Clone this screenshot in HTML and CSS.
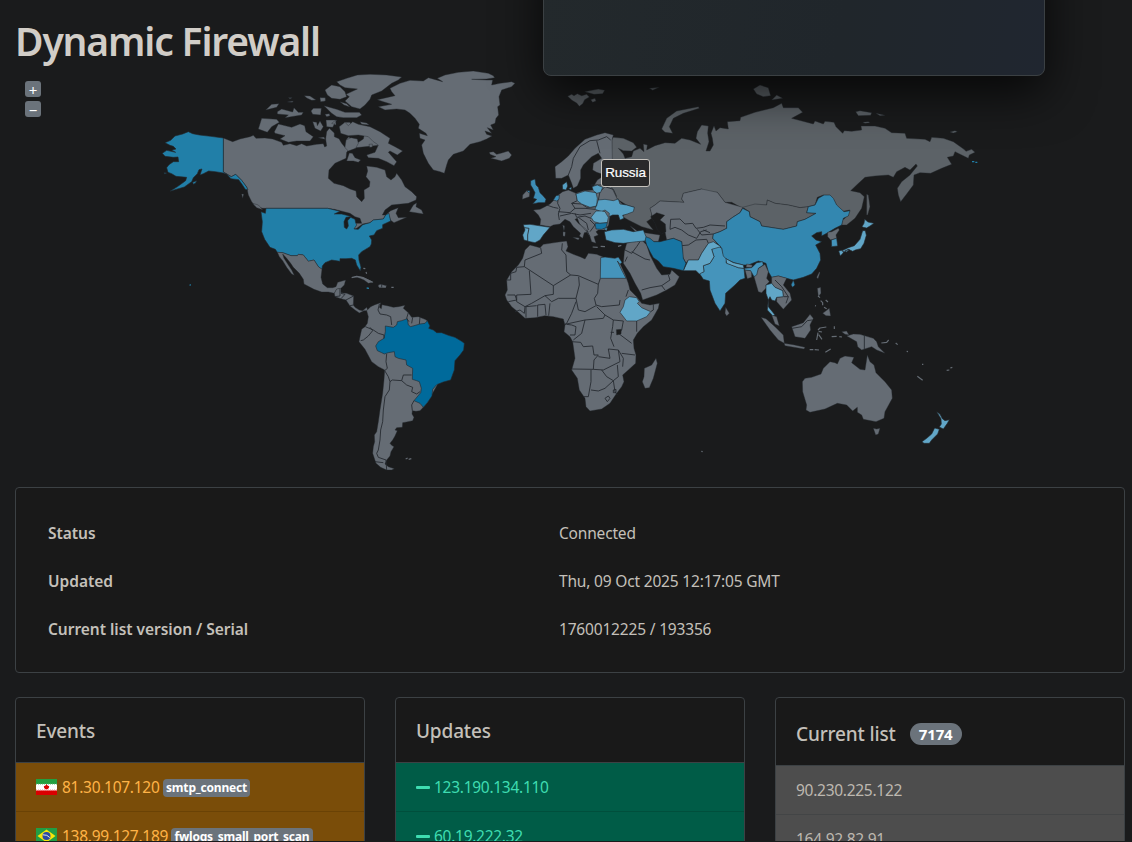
FILE: index.html
```html
<!DOCTYPE html>
<html lang="en">
<head>
<meta charset="utf-8">
<title>Dynamic Firewall</title>
<link rel="stylesheet" href="styles.css">
</head>
<body>
<main class="page">
<h1 class="title">Dynamic Firewall</h1>
<section class="map">
<svg class="world" viewBox="15 71 1110 400" role="img" aria-label="World map">
<!-- North America -->
<g class="land" transform="translate(150 65) scale(.33333)">
<path d="M220 219L248 230 270 222 300 215 310 211 318 220 345 219 368 222 395 232 400 241 420 236 440 242 455 236 470 243 500 238 520 236 524 246 530 243 527 222 530 200 538 190 553 204 553 215 567 221 575 235 585 247 590 222 597 215 610 235 625 232 640 222 645 200 655 190 665 200 660 215 680 218 695 240 600 250 590 262 588 280 555 295 537 315 535 340 552 355 580 362 600 372 618 378 620 395 635 410 643 400 642 375 658 365 660 350 648 335 653 318 650 303 680 307 705 315 710 335 723 345 735 335 740 325 755 345 765 365 785 380 800 395 798 405 775 415 745 418 725 420 705 435 697 450 707 450 700 462 670 465 660 473 638 477 620 490 612 493 615 475 635 475 630 460 615 455 600 445 570 437 553 433 532 430 338 430 315 423 305 410 295 390 292 375 290 366 275 346 257 328 244 335 220 321Z"/>
<path d="M707 450L722 437 745 428 738 445 745 458 770 457 732 473 722 466 717 452ZM778 440L790 420 800 413 798 425 815 435 820 447 778 440M335 160L380 163 388 172 365 185 352 202 325 192ZM373 200L385 177 425 187 450 177 464 182 468 200 490 215 480 228 440 228 415 232 390 222 405 212 375 205ZM382 140L395 132 428 141 432 128 445 142 460 142 455 150 405 158 415 150 382 147ZM347 135L365 118 387 116 380 127ZM463 92L480 93 498 105 485 106 470 99ZM483 138L490 130 514 130 512 150 488 148ZM488 170L500 172 502 182 510 168 520 185 512 198 495 190ZM528 165L560 165 548 187 530 185ZM568 185L585 172 600 172 610 190 600 210 575 205ZM412 111L430 108 427 112ZM415 98L427 98 420 101ZM510 98L526 102 520 109 512 106ZM525 148L538 146 540 152 530 155ZM505 218L522 216 525 223ZM275 387L281 387 278 400ZM308 415L325 420 338 434 320 428ZM545 175L558 165 558 180Z"/>
<path d="M560 50L590 40 622 30 660 28 710 30 755 36 745 45 725 55 695 78 665 90 660 103 645 120 630 132 605 125 585 108 598 95 588 88 622 72 585 68 570 60ZM525 75L545 60 570 65 585 80 590 95 570 103 545 100 532 90ZM522 122L560 133 585 142 628 142 635 150 620 158 580 158 560 155 545 145ZM568 185L585 172 595 182 608 170 625 178 660 185 690 200 720 220 715 235 735 245 758 258 742 270 720 258 715 262 740 290 732 302 710 290 685 280 655 278 650 270 675 262 685 240 670 230 655 215 625 210 595 212 572 205ZM657 238L667 237 667 246 659 247ZM588 225L603 218 622 222 625 235 617 250 595 258 585 248ZM590 288L598 264 607 265 615 278 632 285 625 292 610 288ZM630 170L650 174 658 180 635 178ZM510 98L526 98 526 108 512 110ZM570 110L590 116 600 126 582 120Z"/>
<path d="M862 40L885 30 925 22 970 18 1015 25 1030 32 1034 38 1010 42 965 43 1010 45 1028 45 1025 60 1050 55 1085 50 1095 55 1085 65 1055 75 1047 95 1050 120 1043 125 1046 150 1038 160 1035 175 1022 180 1030 195 1012 188 1025 205 1005 198 1010 208 1026 213 1010 222 990 230 960 238 940 258 910 268 895 285 890 300 883 325 870 320 850 315 835 295 820 265 815 240 825 225 810 220 808 205 832 212 828 205 805 190 808 178 795 160 780 145 765 135 740 132 705 135 685 125 725 118 700 110 682 104 735 92 725 80 720 70 750 55 780 46 820 48 835 38 878 50ZM1018 262L1030 260 1040 268 1055 264 1075 258 1085 270 1078 280 1055 288 1035 283 1022 280 1038 275 1020 268Z"/>
<path class="us" d="M220 219L182 214 148 210 128 206 115 200 98 207 75 213 62 226 45 233 60 241 70 244 78 252 65 256 77 262 50 256 37 265 45 274 70 277 84 276 86 290 70 290 57 299 50 308 54 322 65 326 78 334 110 337 107 347 84 364 60 379 75 374 103 366 125 350 130 338 142 326 147 314 156 312 150 330 160 326 176 318 196 320 220 324 230 327 243 341 266 344 276 358 286 373 294 375 290 366 275 346 257 328 244 335 220 321ZM128 352L140 347 137 354 130 358ZM42 323L50 324 44 327Z"/>
</g>
<g class="land" transform="translate(240 190) scale(.33333)">
<path class="us" d="M78 55L263 55 284 60 300 64 283 72 305 72 320 76 333 80 318 82 312 95 313 112 320 117 325 108 323 92 332 82 345 88 347 98 350 105 342 117 355 118 368 104 390 98 400 90 430 87 437 75 447 70 450 85 452 93 428 104 428 115 410 122 402 135 388 138 395 150 394 162 390 170 365 185 356 195 357 210 363 232 361 243 350 225 346 210 335 205 318 206 300 206 300 214 275 210 255 218 247 228 246 238 235 230 222 210 205 214 190 195 175 193 172 197 153 197 128 188 112 187 106 178 90 172 74 148 65 125 67 95 63 65 76 70Z"/>
<path d="M112 187L128 188 153 197 172 197 175 193 190 195 205 214 222 210 235 230 246 238 243 262 248 282 262 293 278 293 288 290 293 277 317 270 313 285 303 295 290 298 283 310 265 306 245 306 222 298 192 282 190 268 178 250 160 232 152 220 140 205 128 192 132 205 145 225 155 240 163 256 155 252 140 232 128 212 118 200Z"/>
<path d="M283 310L290 297 303 295 303 308 320 310 341 318 340 345 345 352 358 360 368 362 380 352 384 362 372 362 358 369 345 360 330 348 318 330 303 326 285 320ZM335 263L350 258 370 262 388 270 400 277 385 280 372 270 352 262ZM415 285L422 283 440 287 436 293 415 291Z"/>
<path class="isle" d="M335 263L350 259 370 263 398 277M417 291L438 291M454 292L461 292M378 246L380 251M370 235L376 236"/>
<path class="lines" d="M300 297L300 318 285 320M303 310L315 313 303 326M318 330L341 318M330 347L341 345M425 283L425 292"/>
<path class="us isle-us" d="M380 294L387 295M-151 284L-148 286"/>
</g>
<!-- South America -->
<g class="land" transform="translate(340 290) scale(.33333)">
<path d="M80 62L92 50 105 44 122 38 118 52 124 56 126 44 145 48 160 52 175 50 195 46 190 55 205 68 215 82 235 80 255 88 262 92 266 115 343 200 300 270 262 338 250 352 240 362 228 364 217 362 216 372 222 382 218 392 200 396 188 398 187 412 170 413 165 420 172 422 165 438 158 450 150 460 155 466 162 470 153 485 150 498 140 510 135 522 145 530 163 536 155 540 140 540 122 532 108 520 98 490 100 470 104 455 103 435 110 425 115 395 120 360 128 310 132 270 134 240 115 230 95 215 75 178 57 155 60 140 65 118 75 110 82 100 85 80Z"/>
<path class="isle" d="M197 507L203 504M206 508L214 506"/>
<path class="br" d="M136 108L160 112 170 105 172 95 185 92 202 86 205 105 212 110 240 102 255 100 262 92 270 108 266 115 280 120 290 128 305 128 325 136 345 142 365 154 373 160 371 180 360 195 345 212 343 240 332 270 310 276 290 284 278 298 276 318 262 338 250 352 240 340 222 332 242 308 244 295 238 275 230 272 217 268 218 235 200 225 198 210 175 205 165 200 163 185 145 188 133 192 125 188 112 182 107 168 115 155 132 145 136 125Z"/>
<path class="lines" d="M118 42L114 60 120 72 140 75 152 80 155 105M205 68L200 85 207 95M218 82L215 100M240 82L238 102M90 112L98 122 85 138 70 150 62 152M76 110L100 120 115 130 132 135 132 145M140 192L138 215 142 235 134 242 145 260 150 275 157 270 185 272 190 255 215 255M185 272L200 285 218 292 215 305 230 312 240 305M217 362L215 345 222 332M150 275L148 300 135 320 130 360 128 395 122 420 120 450 115 480 110 490 115 502 138 510 140 540M105 515L130 518"/>
</g>
<!-- Russia and Arctic islands -->
<g class="land" transform="translate(640 75) scale(.33333)">
<path class="ru" d="M-85 195L-80 187 -50 190 -20 203 -10 217 -25 228 -50 227 -65 220 -50 237 -45 250 -25 245 -20 228 0 220 12 230 10 207 22 210 20 225 45 212 75 203 105 205 125 190 150 195 182 208 168 190 172 170 185 150 205 153 203 175 207 200 198 228 210 228 220 210 217 190 213 175 222 152 228 168 240 158 265 162 262 140 300 137 302 127 345 112 400 98 425 85 430 98 475 98 488 112 455 130 520 147 525 138 550 147 555 139 582 142 588 155 608 175 613 167 635 169 665 165 663 153 705 153 735 160 755 173 795 175 800 190 855 193 870 200 875 187 910 190 940 200 972 223 978 229 995 223 1005 232 988 240 985 250 965 240 945 230 940 243 922 247 935 268 905 280 872 295 840 293 822 300 820 330 800 357 782 380 775 360 772 340 785 320 810 300 832 273 828 267 810 285 795 277 770 290 760 307 745 300 705 303 675 307 650 330 632 347 660 353 673 365 665 400 645 430 620 450 605 450 607 435 615 430 630 405 602 410 580 390 570 370 550 360 532 367 525 390 505 395 480 398 445 390 405 385 382 375 380 390 345 390 308 400 275 382 255 382 232 352 195 350 185 342 130 355 125 372 132 382 60 378 45 390 30 400 35 415 35 430 20 440 40 465 5 455 -35 435 -52 425 -45 412 -17 397 -40 390 -65 375 -78 360 -100 330 -95 265 -85 225ZM65 162L80 130 110 108 175 95 178 100 130 115 100 130 88 155 98 175 75 172ZM340 42L360 30 385 38 392 62 370 65 350 57ZM395 75L410 60 428 70ZM28 40L58 37 38 46ZM647 110L660 107 695 113 692 121 655 122ZM708 115L735 121 720 122ZM668 142L685 140 690 143 675 145ZM930 171L945 167 952 170 940 174ZM680 358L685 360 690 395 683 420 680 420Z"/>
<path class="us isle-us" d="M996 260L1003 260M1006 262L1012 262"/>
<path class="ru" d="M-217 64L-205 58 -198 62 -188 56 -175 62 -160 58 -152 66 -166 74 -172 86 -182 94 -190 84 -204 76ZM-166 50L-145 46 -125 42 -106 46 -112 56 -138 58 -152 54ZM-148 74L-135 70 -132 78 -142 82Z"/>
</g>
<!-- Asia -->
<g class="land" transform="translate(660 200) scale(.33333)">
<path d="M-30 25L-15 15 0 3 72 7 65 -3 70 -20 125 -33 172 -23 195 7 248 22 240 38 218 52 200 65 200 85 180 95 160 102 158 115 172 130 145 130 125 160 115 180 85 180 78 190 68 170 65 125 40 115 20 120 15 95 -20 60Z"/>
<path class="lines" d="M30 88L32 58 60 57 75 72 98 70 108 85 130 82 150 75 195 78M30 88L45 82 65 90 85 105 110 115 122 95 140 90M66 137L85 135 108 120 140 118 145 130M112 88L125 105 160 102M130 90L150 98"/>
<path class="ru" d="M248 22L285 12 320 15 322 0 345 10 385 15 420 23 445 20 440 38 468 40 435 58 412 65 410 78 370 88 305 78 300 65 270 50 268 35Z"/>
<path class="cn" d="M248 25L268 35 270 50 300 65 305 78 370 88 410 78 412 65 435 58 468 40 440 38 445 20 465 15 475 -5 492 -15 510 -15 520 -5 530 15 552 35 570 32 565 48 550 55 545 75 525 85 500 100 485 108 485 95 470 98 455 108 468 120 485 125 467 135 480 160 482 180 470 205 455 222 430 232 400 240 380 235 355 228 335 232 325 215 318 190 295 183 265 195 250 195 222 188 200 178 188 170 185 145 172 130 158 115 160 102 180 95 200 85 200 65 218 52 240 38ZM393 255L400 240 405 255 398 262Z"/>
<path d="M503 97L515 95 535 85 538 90 528 105 530 115 512 120 503 110ZM260 192L277 195 275 203 258 202ZM255 210L275 212 275 232 262 236ZM282 230L295 205 315 193 325 215 320 235 328 245 318 255 325 290 318 265 305 278 295 275ZM335 232L355 228 380 235 370 255 390 280 395 300 370 328 350 305 350 292 370 290 368 272 345 262 335 250ZM335 345L350 350 358 378 345 372ZM197 322L208 340 200 348 195 340ZM303 352L318 356 345 380 370 405 373 430 355 420 330 390ZM372 430L400 434 435 442 432 447 375 437ZM395 380L430 368 450 343 460 355 450 375 452 390 435 415 405 410ZM470 232L478 215 480 218 474 236ZM472 265L482 262 483 280 475 290ZM488 340L508 325 512 348 498 347ZM545 395L560 393 567 405 555 403ZM560 408L580 402 600 403 640 415 650 425 655 440 675 460 650 450 635 440 605 450 593 440 590 425 572 415Z"/>
<path class="isle" d="M474 390L480 384 499 381M476 394L486 396M474 398L470 420M476 404L486 418M474 288L480 293M482 302L488 308 488 316M497 300L504 306M492 322L500 326M523 379L523 387M449 449L460 449M464 449L477 450M496 457L512 447M515 410L530 409M538 410L546 411M664 429L680 427 686 420M465 317L468 318"/>
<path class="lines" d="M613 404L613 448M397 385L425 380 442 362 456 360M345 240L365 260 385 290 378 310M372 290L385 290"/>
<path class="in" d="M172 135L185 145 190 168 200 178 198 188 235 203 252 205 255 235 240 240 225 255 197 280 195 310 180 333 165 310 150 270 148 243 130 238 118 220 132 215 130 197 150 190 162 170 155 148ZM253 205L275 203 290 188 308 185 310 195 295 205 290 225 282 230 272 212 255 210Z"/>
<path class="pk" d="M70 212L85 180 115 180 125 160 145 130 160 125 183 140 155 148 162 170 150 190 130 197 132 215 118 222 108 212ZM198 176L220 188 250 195 252 205 235 203 200 190ZM318 255L335 250 345 262 368 272 370 290 350 292 345 303 335 300 330 290 325 300 325 320 345 345 338 347 322 330 325 300 318 280ZM606 80L612 70 614 58 624 66 642 70 630 78 620 84 610 82ZM608 92L616 92 619 106 612 130 602 146 586 150 578 154 565 148 552 156 545 152 565 143 583 137 600 118ZM536 153L548 150 550 158 541 168ZM555 151L568 149 558 157Z"/>
<path class="in" d="M514 120L530 115 533 138 515 140Z"/>
<path class="sea" d="M-28 50L-10 38 14 46 0 60 16 72 18 95 5 102 -8 90 -15 70Z"/>
</g>
<!-- Australia and Pacific -->
<g class="land" transform="translate(750 300) scale(.33333)">
<path d="M157 245L165 235 185 232 213 222 220 205 240 185 255 188 262 192 270 175 285 168 312 172 305 188 330 208 345 210 352 165 360 185 372 195 378 218 405 245 425 270 427 295 405 335 402 355 378 365 340 358 335 345 322 337 322 322 308 333 290 315 262 310 225 327 180 337 168 330 170 315 158 275ZM370 385L380 387 390 385 385 402 377 405Z"/>
<path class="isle" d="M502 229L518 241M590 211L598 210M601 204L607 202M437 129L443 134M470 154L474 155M516 193L520 193M-146 454L-142 455"/>
<path class="pk" d="M560 335L570 343 577 356 585 362 598 359 592 370 580 387 568 381 574 372 573 356ZM516 425L530 415 545 402 554 384 568 388 563 402 545 420 538 430 522 430Z"/>
</g>
<!-- Africa and Middle East -->
<g class="land" transform="translate(490 235) scale(.33333)">
<path d="M120 30L150 38 160 28 200 22 230 18 234 35 228 48 250 58 270 65 285 72 295 55 320 58 345 68 375 70 385 68 392 90 405 118 415 145 420 165 440 185 455 205 480 210 508 205 505 220 485 255 460 275 442 295 430 315 432 340 438 360 437 385 415 405 398 420 402 440 395 455 380 475 360 505 335 522 300 528 288 515 285 490 268 465 262 430 245 405 255 370 248 320 240 305 222 290 225 270 220 252 190 245 165 242 135 248 105 250 85 232 65 215 50 195 45 180 52 165 50 135 65 110 85 90 98 70 105 45ZM463 400L485 390 498 370 502 385 490 430 478 458 465 460 457 440 462 425ZM403 50L410 25 450 10 470 30 480 60 490 80 500 100 515 120 540 118 545 105 568 125 555 150 530 165 500 180 458 195 452 175 435 145 420 115 400 85ZM420 -28L445 -10 510 0 505 20 465 20 450 5Z"/>
<path class="isle" d="M332 34L345 35M384 34L394 31"/>
<path class="lines" d="M152 38L155 55 105 75 103 95 80 97 78 110 62 115 62 135 50 135M103 95L190 152 190 178 165 182 125 205 105 215 80 200 80 180 123 178 118 107M217 25L215 45 228 60 230 110 242 120 190 152M242 120L265 122 325 148 331 130M325 148L323 175 313 190 318 210 335 215 388 210 390 195M266 125L268 150 258 190 205 190 185 200 165 182M258 190L265 225 285 230 318 212M258 200L245 235 230 265 225 268 285 255 340 250 345 240 320 215M285 255L275 295 250 315M230 268L245 270 258 275 255 300 240 300M245 320L272 322 280 335 308 333 312 360 325 360 312 375 310 403 245 402M325 365L360 370 355 342 385 345 390 380 340 405 310 403M345 240L370 255 368 275 362 310 372 335M370 255L400 258 395 285 385 295 425 325M395 355L435 360M385 345L400 370 398 395M440 258L440 290M303 405L303 440 295 485 280 485M303 465L325 468 345 460 370 437 375 470 382 480M335 405L350 425 370 437 385 425 382 390M345 490L355 483 360 490 352 500 345 490M370 465L378 463 378 473 370 473ZM105 215L103 235 90 225 75 230M108 248L108 215 140 212M143 245L143 210 165 208 168 240M176 242L180 205M52 180L75 180 80 195 55 200M362 292L372 292M415 165L408 185M490 208L490 225 482 230M405 45L425 55 440 35 450 20M425 50L465 72 480 75M455 165L480 158 515 152 540 135 535 120M515 152L525 165M412 65L405 80"/>
<path class="sea" d="M379 284L394 283 393 297 380 300Z"/>
<path class="in" d="M332 68L345 66 375 70 385 66 396 82 390 88 382 78 395 105 408 130 331 130Z"/>
<path class="pk" d="M405 195L418 185 440 188 448 200 442 205 455 218 482 230 470 245 440 258 410 258 390 232 400 215Z"/>
<path class="ir" d="M462 3L480 10 492 20 510 20 550 10 575 20 578 45 580 70 588 85 580 107 550 100 520 95 505 78 490 68 480 50 470 30Z"/>
</g>
<!-- Europe -->
<g class="land" transform="translate(490 130) scale(.33333)">
<path d="M197 145L195 110 215 95 235 78 255 55 285 28 320 15 345 8 370 15 366 30 367 85 380 120 365 172 382 208 400 225 360 255 356 285 345 300 325 300 318 305 325 315 312 320 318 340 305 335 300 320 290 305 278 292 268 280 262 265 255 268 265 280 285 295 295 305 283 308 278 325 268 318 272 310 250 290 240 275 225 268 210 282 190 285 180 290 150 285 152 268 145 255 130 240 150 238 165 230 180 222 192 210 205 195 218 185 235 180 258 190 280 182 310 180 310 170 322 150 345 135 320 127 308 120 310 100 335 85 325 70 305 80 280 105 272 120 272 145 262 168 250 175 245 160 235 135 215 145ZM97 208L98 195 110 182 120 184 118 200ZM218 285L224 288 222 302ZM219 305L226 306 225 319 219 318ZM248 322L268 324 265 330Z"/>
<path class="isle" d="M308 351L323 352"/>
<path class="lines" d="M235 135L245 110 250 85 270 50 300 32 325 30 350 20 362 30M320 32L330 70M205 195L203 220 210 235 205 252 208 270M258 190L262 212 245 220 255 235 240 248 205 245M170 225L190 232 205 235M245 220L275 222 290 232 320 230M255 235L285 235 315 238M210 258L245 250 270 255 303 250M255 250L260 262 285 258 303 265M265 262L290 280 295 300M300 270L315 285 300 305M290 300L300 320M325 210L330 185 345 170 370 178 380 200M302 165L340 165"/>
<path class="uk" d="M122 152L135 147 138 165 145 172 150 188 160 198 168 208 165 218 145 218 128 222 140 208 130 205 135 188 128 175 122 165ZM110 182L120 182 118 190ZM190 210L198 197 208 195 207 208 200 213Z"/>
<path class="pl" d="M217 165L230 155 233 168 228 180 218 178ZM236 175L245 172 243 180ZM258 192L285 183 318 188 322 205 320 228 300 232 275 222 262 212ZM306 170L322 165 338 172 332 187 320 190 310 182ZM325 210L345 208 370 212 385 207 390 222 410 225 433 232 430 245 412 252 398 256 402 265 390 270 385 255 368 255 357 260 358 250 345 240 335 245 315 238ZM343 305L365 300 400 298 430 305 460 300 468 320 465 333 440 335 400 340 375 338 348 330ZM340 295L352 293 350 303Z"/>
<path class="pk" d="M318 243L335 243 345 245 355 262 352 278 330 280 312 275 303 262ZM100 284L120 283 180 292 160 315 150 330 135 338 120 335 102 330 98 315 105 300Z"/>
<path class="ir" d="M315 280L330 280 352 278 348 293 335 298 318 297Z"/>
<path class="lines" d="M103 293L117 295 113 315 113 333"/>
</g>
</svg>
<div class="controls"><button>+</button><button>−</button></div>
<div class="tip">Russia</div>
</section>
<section class="panel info">
<b>Status</b><span>Connected</span>
<b>Updated</b><span>Thu, 09 Oct 2025 12:17:05 GMT</span>
<b>Current list version / Serial</b><span>1760012225 / 193356</span>
</section>
<div class="cards">
<section class="panel card events">
<h2>Events</h2>
<div class="row"><svg class="flag" viewBox="0 0 21 16"><path fill="#fff" d="M0 0h21v16H0z"/><path fill="#239f40" d="M0 0h21v5H0z"/><path fill="#da0000" d="M0 11.4h21V16H0z"/><path stroke="#9bcda4" stroke-dasharray="1 1" d="M0 5.3h21"/><path stroke="#ec8989" stroke-dasharray="1 1" d="M0 11h21"/><path fill="#da0000" d="M10.5 5l1 1.6 1.7.7-.4 1.8-1.2 1.1h-2.2L8.2 9.1 7.8 7.3l1.7-.7z"/></svg><span class="ip">81.30.107.120</span><span class="badge b1">smtp_connect</span></div>
<div class="row"><svg class="flag" viewBox="0 0 21 16"><path fill="#229e45" d="M0 0h21v16H0z"/><path fill="#f8e509" d="M10.5 1.5L19.5 8l-9 6.500L1.500 8z"/><circle cx="10.5" cy="8" r="4" fill="#2b49a3"/><path stroke="#e8ecd8" fill="none" d="M6.800 6.800q4.500-.4 7 2.800"/></svg><span class="ip">138.99.127.189</span><span class="badge b2">fwlogs_small_port_scan</span></div>
</section>
<section class="panel card updates">
<h2>Updates</h2>
<div class="row"><i class="dash"></i><span>123.190.134.110</span></div>
<div class="row"><i class="dash"></i><span>60.19.222.32</span></div>
</section>
<section class="panel card list">
<h2>Current list <span class="count">7174</span></h2>
<div class="row"><span>90.230.225.122</span></div>
<div class="row"><span>164.92.82.91</span></div>
</section>
</div>
</main>
<aside class="overlay"></aside>
</body>
</html>
```
FILE: styles.css
```css
* { box-sizing: border-box; }
body { margin: 0; height: 842px; overflow: hidden; background: #1a1b1c; color: #c4c0ba; font: 16px/24px "Noto Sans", "Open Sans", sans-serif; }
.page { height: 841px; overflow: hidden; padding: 17px 7px 0 15px; }
.title { margin: 0; height: 54px; color: #d1cdc7; font-size: 39px; line-height: 48px; font-weight: 600; letter-spacing: -1.15px; white-space: nowrap; }
.map { position: relative; height: 400px; }
.world { display: block; width: 1110px; height: 400px; }
.land { fill: #656c74; stroke: #24292e; stroke-width: 1.2; stroke-linejoin: round; }
.lines { fill: none; stroke-width: 2.6; }
.isle { fill: none; stroke: #656c74; stroke-width: 3.5; }
.ru { fill: #5c6267; }
.us { fill: #217fa8; }
.isle-us { stroke: #217fa8; stroke-width: 4; }
.br { fill: #006a9b; }
.cn { fill: #3387b0; }
.in { fill: #4594bb; }
.uk { fill: #3d8eb7; }
.pl { fill: #559fc3; }
.pk { fill: #61a6c7; }
.ir { fill: #1775a3; }
.us, .br, .cn, .in, .uk, .pl, .pk, .ir { stroke-width: 1.8; }
.us.isle-us { stroke-width: 4; }
.sea { fill: #1a1b1c; }
.controls { position: absolute; left: 10px; top: 10px; display: grid; gap: 4px; }
.controls button { width: 16px; height: 16px; padding: 1px 0 0; border: 0; border-radius: 3px; background: #6b737b; color: #fff; font: 15px/16px "Noto Sans", sans-serif; }
.tip { position: absolute; left: 586px; top: 88px; width: 49px; height: 28px; border: 1px solid #c5c2bd; border-radius: 3px; background: #29292a; color: #fff; font: 500 13.500px/25px "Liberation Sans", sans-serif; -webkit-text-stroke: .2px #fff; letter-spacing: -.1px; text-align: center; }
.panel { border: 1px solid #3c4144; border-radius: 4px; background: #191919; }
.info { display: grid; grid-template-columns: 511px 1fr; grid-auto-rows: 48px; align-items: center; height: 186px; margin-top: 16px; padding: 21px 32px 19px; font-size: 15.500px; }
.info b { font-weight: 600; letter-spacing: -.03px; }
.info span { letter-spacing: -.18px; }
.cards { display: grid; grid-template-columns: repeat(3, 350px); gap: 30px; margin-top: 24px; }
.card { height: 170px; overflow: hidden; }
.card h2 { display: flex; align-items: center; margin: 0; height: 65px; padding: 2px 20px 0; border-bottom: 1px solid #3c4144; font-size: 19px; font-weight: 500; letter-spacing: -.15px; }
.list h2 { height: 68px; padding-top: 4px; }
.count { margin-left: 14px; width: 52px; height: 22px; border-radius: 11px; background: #6b737b; color: #fff; font-size: 15px; line-height: 22px; font-weight: 700; text-align: center; }
.row { display: flex; align-items: center; height: 49px; padding: 0 20px; border-bottom: 1px solid; font-size: 15.500px; letter-spacing: -.28px; white-space: nowrap; }
.events .row { background: #7a4d09; border-color: #6a4205; color: #ffb347; }
.updates .row { background: #005c47; border-color: #004f3c; color: #3fdcb1; }
.list .row { background: #4d4d4d; border-color: #434546; color: #bdb8b0; }
.flag { width: 21px; height: 16px; margin-right: 5px; }
.ip { width: 97px; }
.row + .row .ip { width: 105px; }
.badge { margin: 2px 0 0 4px; height: 18px; border-radius: 4px; background: #6b737b; color: #fff; font-size: 12px; line-height: 18px; font-weight: 700; text-align: center; letter-spacing: -.2px; }
.b1 { width: 87px; }
.b2 { width: 142px; }
.dash { width: 14px; height: 3px; margin-right: 4px; border-radius: 1px; background: #3fdcb1; }
.overlay { position: absolute; left: 543px; top: -60px; width: 502px; height: 136px; border: 1px solid #3b4043; border-radius: 8px; background: linear-gradient(100deg, #23292c, #20262b 60%, #202630); box-shadow: 0 16px 48px rgba(0,0,0,.75); }
```
